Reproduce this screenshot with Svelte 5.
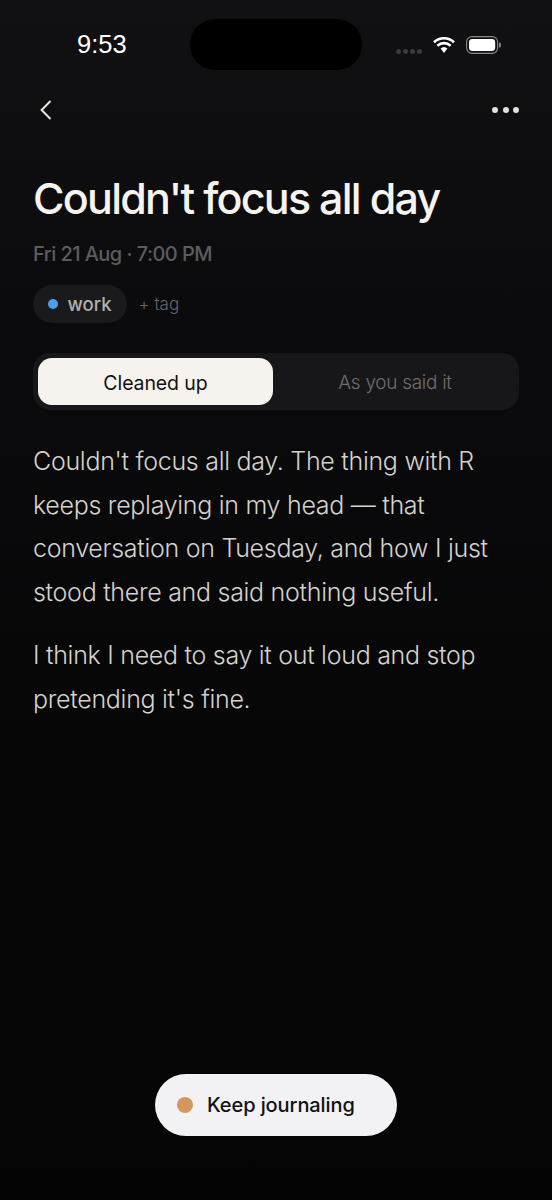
<script>
	let mode = $state('clean');
</script>

<div class="screen">
	<div class="statusbar">
		<span class="time">9:53</span>
		<div class="island"></div>
		<div class="status-icons">
			<div class="signal"><i></i><i></i><i></i><i></i></div>
			<svg class="wifi" width="22" height="18" viewBox="0 0 22 18">
				<path d="M1 6.2a14.5 14.5 0 0 1 20 0M4.4 9.8a9.6 9.6 0 0 1 13.2 0" fill="none" stroke="#fff" stroke-width="2.6" />
				<path d="M7.6 12.6a5 5 0 0 1 6.8 0L11 17z" fill="#fff" />
			</svg>
			<svg class="battery" width="36" height="18" viewBox="0 0 36 18">
				<rect x="0.6" y="0.6" width="31" height="16.8" rx="5.4" fill="none" stroke="#8a8a8c" stroke-width="1.1" />
				<rect x="3" y="3" width="26.2" height="12" rx="3.4" fill="#fff" />
				<rect x="33" y="6.5" width="1.8" height="5" rx="0.9" fill="#8a8a8c" />
			</svg>
		</div>
	</div>

	<div class="nav">
		<svg width="12" height="20" viewBox="0 0 12 20">
			<path d="M10.5 1 1.6 10l8.9 9" fill="none" stroke="#e9e5df" stroke-width="2" />
		</svg>
		<div class="more"><i></i><i></i><i></i></div>
	</div>

	<main class="content">
		<h1>Couldn't focus all day</h1>
		<p class="meta">Fri 21 Aug · 7:00 PM</p>
		<div class="tags">
			<span class="tag"><span class="tag-dot"></span>work</span>
			<span class="add-tag">+ tag</span>
		</div>

		<div class="segmented">
			<button class:active={mode === 'clean'} onclick={() => (mode = 'clean')}>Cleaned up</button>
			<button class:active={mode === 'raw'} onclick={() => (mode = 'raw')}>As you said it</button>
		</div>

		<div class="entry">
			<p>Couldn't focus all day. The thing with R keeps replaying in my head — that conversation on Tuesday, and how I just stood there and said nothing useful.</p>
			<p>I think I need to say it out loud and stop pretending it's fine.</p>
		</div>
	</main>

	<button class="keep"><span class="keep-dot"></span>Keep journaling</button>
</div>

<style>
	:global(body) {
		background: #060608;
	}

	.screen {
		width: 552px;
		height: 1200px;
		display: flex;
		flex-direction: column;
		overflow: hidden;
		background: linear-gradient(to bottom, #111113 0, #0b0b0d 300px, #060607 800px, #040405 100%);
		font-family: Inter, 'Liberation Sans', sans-serif;
		color: #f5f2ed;
	}

	.statusbar {
		display: grid;
		grid-template-columns: 1fr 172px 1fr;
		align-items: center;
		height: 51px;
		margin-top: 19px;
	}

	.time {
		justify-self: start;
		margin-left: 77px;
		font-size: 25.5px;
		font-weight: 500;
		color: #fff;
		font-family: 'Liberation Sans', sans-serif;
	}

	.island {
		height: 51px;
		border-radius: 25px;
		background: #000;
	}

	.status-icons {
		display: flex;
		align-items: center;
		margin-left: 34px;
	}

	.signal {
		display: flex;
		gap: 2px;
		margin-top: 13px;
		margin-right: 11px;
	}

	.signal i {
		width: 5px;
		height: 5px;
		border-radius: 50%;
		background: #3a3a3c;
	}

	.wifi {
		margin-right: 11px;
	}

	.nav {
		display: flex;
		justify-content: space-between;
		align-items: center;
		margin-top: 28px;
		padding: 0 33px 0 40px;
		height: 24px;
	}

	.more {
		display: flex;
		gap: 4.5px;
	}

	.more i {
		width: 6px;
		height: 6px;
		border-radius: 50%;
		background: #e6e1da;
	}

	.content {
		padding: 0 33px;
	}

	h1 {
		margin: 50px 0 0;
		font-size: 43px;
		line-height: 52px;
		font-weight: 500;
		letter-spacing: -1.75px;
		color: #f7f4ef;
	}

	.meta {
		margin: 17px 0 0;
		font-size: 20px;
		line-height: 26px;
		font-weight: 500;
		letter-spacing: -0.55px;
		color: #5c5c5e;
	}

	.tags {
		display: flex;
		align-items: center;
		gap: 12px;
		margin-top: 18px;
	}

	.tag {
		display: flex;
		align-items: center;
		height: 38px;
		padding: 0 15px;
		border-radius: 19px;
		background: #1a1a1c;
		font-size: 18.5px;
		font-weight: 500;
		color: #b3b1ae;
	}

	.tag-dot {
		width: 10px;
		height: 10px;
		border-radius: 50%;
		background: #4d9de8;
		margin-right: 9.5px;
	}

	.add-tag {
		font-size: 17px;
		font-weight: 300;
		color: #666668;
	}

	.segmented {
		display: grid;
		grid-template-columns: 235px 1fr;
		margin-top: 30px;
		padding: 5px;
		height: 57px;
		box-sizing: border-box;
		border-radius: 17px;
		background: #171719;
	}

	.segmented button {
		border: 0;
		border-radius: 14px;
		background: transparent;
		font: inherit;
		font-size: 19px;
		font-weight: 300;
		letter-spacing: -0.3px;
		color: #6d6d6f;
		padding: 2px 0 0 3px;
	}

	.segmented button.active {
		background: #f6f3ee;
		color: #111;
		font-weight: 400;
		letter-spacing: -0.1px;
		font-size: 19.5px;
		padding: 2px 0 0;
	}

	.entry {
		margin-top: 30px;
	}

	.entry p {
		margin: 0 0 19px;
		font-size: 25px;
		line-height: 43.7px;
		font-weight: 300;
		letter-spacing: -0.29px;
		color: #d5d2cd;
	}

	.keep {
		align-self: center;
		display: flex;
		align-items: center;
		margin-top: auto;
		margin-bottom: 64px;
		height: 62px;
		width: 242px;
		padding: 0 0 0 22px;
		box-sizing: border-box;
		border: 0;
		border-radius: 31px;
		background: #f2f2f4;
		font: inherit;
		font-size: 20px;
		font-weight: 500;
		letter-spacing: -0.1px;
		color: #111;
	}

	.keep-dot {
		width: 16px;
		height: 16px;
		border-radius: 50%;
		background: #d4985e;
		margin-right: 14px;
	}
</style>
